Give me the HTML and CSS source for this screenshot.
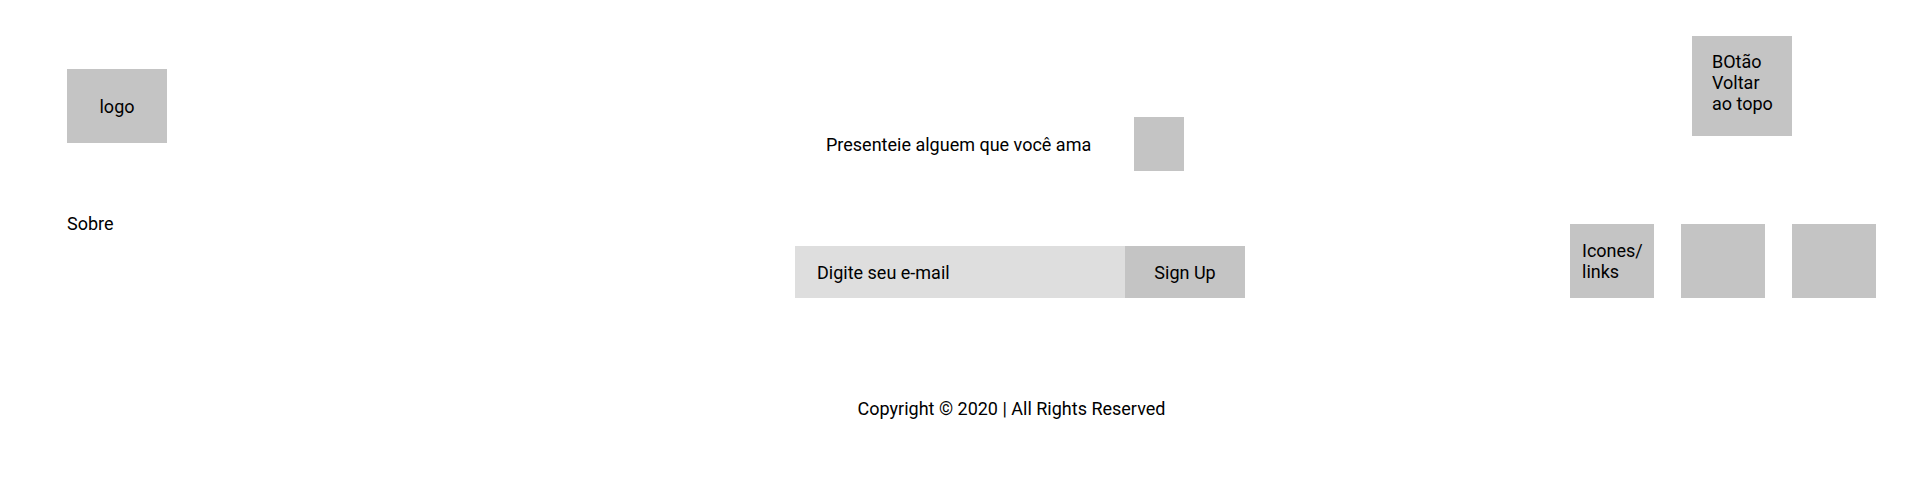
FILE: index.html
```html
<!DOCTYPE html>
<html lang="pt-BR">
<head>
<meta charset="utf-8">
<title>Footer</title>
<link rel="stylesheet" href="styles.css">
</head>
<body>
<footer class="footer">
  <div class="top">
    <div class="col-left">
      <div class="logo">logo</div>
      <a class="about" href="#">Sobre</a>
    </div>
    <div class="col-middle">
      <div class="gift">
        <span class="gift-text">Presenteie alguem que você ama</span>
        <div class="gift-icon"></div>
      </div>
      <form class="signup">
        <input class="signup-input" type="email" placeholder="Digite seu e-mail">
        <button class="signup-btn" type="button">Sign Up</button>
      </form>
    </div>
    <div class="col-right">
      <div class="back-top">BOtão Voltar ao topo</div>
      <div class="icons">
        <div class="icon-box">Icones/ links</div>
        <div class="icon-box"></div>
        <div class="icon-box"></div>
      </div>
    </div>
  </div>
  <p class="copyright">Copyright © 2020 | All Rights Reserved</p>
</footer>
</body>
</html>
```

FILE: styles.css
```css
* { box-sizing: border-box; }

html, body {
  margin: 0;
  padding: 0;
  background: #ffffff;
}

body {
  font-family: Roboto, "Liberation Sans", Arial, sans-serif;
  font-size: 18px;
  line-height: normal;
  color: #000000;
}

.footer {
  width: 1920px;
  height: 479px;
}

.top {
  display: flex;
  align-items: flex-start;
  padding: 36px 44px 0 67px;
}

.col-left {
  width: 728px;
  display: flex;
  flex-direction: column;
  align-items: flex-start;
  padding-top: 33px;
}

.logo {
  width: 100px;
  height: 74px;
  background: #c4c4c4;
  display: flex;
  align-items: center;
  justify-content: center;
}

.about {
  margin-top: 70px;
  color: #000000;
  text-decoration: none;
}

.col-middle {
  width: 450px;
  display: flex;
  flex-direction: column;
  padding-top: 81px;
}

.gift {
  display: flex;
  align-items: center;
  gap: 43px;
  padding-left: 31px;
  height: 54px;
}

.gift-icon {
  width: 50px;
  height: 54px;
  background: #c4c4c4;
}

.signup {
  display: flex;
  margin: 75px 0 0 0;
  height: 52px;
}

.signup-input {
  width: 330px;
  height: 52px;
  border: 0;
  outline: none;
  background: #dedede;
  padding: 0 0 0 22px;
  font-family: inherit;
  font-size: 18px;
  color: #000000;
}

.signup-input::placeholder {
  color: #000000;
  opacity: 1;
}

.signup-btn {
  width: 120px;
  height: 52px;
  border: 0;
  background: #c4c4c4;
  font-family: inherit;
  font-size: 18px;
  color: #000000;
  padding: 0;
}

.col-right {
  margin-left: auto;
  width: 306px;
  display: flex;
  flex-direction: column;
}

.back-top {
  width: 100px;
  height: 100px;
  margin-left: 122px;
  background: #c4c4c4;
  padding: 15px 12px 0 20px;
}

.icons {
  display: flex;
  gap: 27px;
  margin-top: 88px;
}

.icon-box {
  width: 84px;
  height: 74px;
  background: #c4c4c4;
  padding: 16px 8px 0 12px;
}

.copyright {
  margin: 100px 0 0 0;
  padding-left: 103px;
  text-align: center;
}
```
